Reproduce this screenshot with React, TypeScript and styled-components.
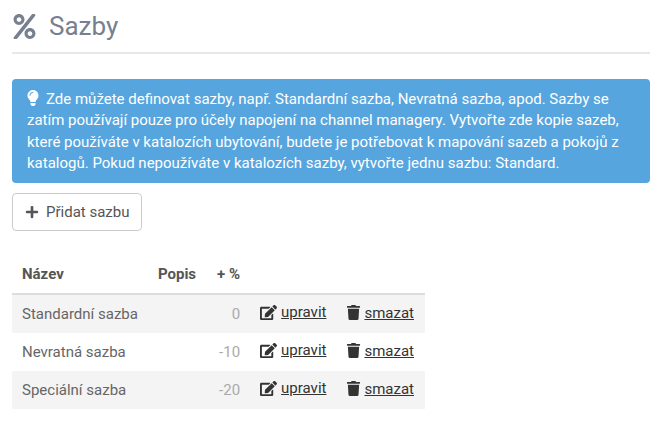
import React from "react";
import styled, { createGlobalStyle } from "styled-components";
import { FaEdit, FaLightbulb, FaPercent, FaPlus, FaTrash } from "react-icons/fa";

const GlobalStyle = createGlobalStyle`
  html, body {
    margin: 0;
    padding: 0;
    background: #fff;
    font-family: Roboto, "Liberation Sans", sans-serif;
    font-size: 15px;
    color: #555;
  }
`;

const Page = styled.div`
  padding: 0 12px;
  width: 638px;
`;

const Header = styled.div`
  display: flex;
  align-items: center;
  gap: 12px;
  height: 52px;
  border-bottom: 2px solid #e8e8e8;
  color: #76808f;
`;

const Title = styled.h1`
  margin: 0;
  font-size: 26px;
  font-weight: 400;
  color: #76808f;
`;

const Alert = styled.div`
  margin-top: 25px;
  background: #56a5de;
  color: #fff;
  border-radius: 4px;
  padding: 10px 15px 8px;
  font-size: 15px;
  line-height: 21.43px;
  height: 104px;
  box-sizing: border-box;
  svg {
    vertical-align: -2px;
    margin: 0 5px 0 -2px;
  }
`;

const AddButton = styled.button`
  display: flex;
  align-items: center;
  gap: 7px;
  margin-top: 10px;
  height: 38px;
  padding: 0 12px;
  background: #fff;
  border: 1px solid #ccc;
  border-radius: 4px;
  font-family: inherit;
  font-size: 15px;
  color: #555;
`;

const Table = styled.table`
  margin-top: 24px;
  border-collapse: collapse;
  font-size: 15px;
`;

const HeadCell = styled.th<{ $percent?: boolean }>`
  height: 38px;
  padding: 0 10px;
  font-weight: 700;
  color: #555;
  text-align: ${(p) => (p.$percent ? "right" : "left")};
  min-width: ${(p) => (p.$percent ? "24px" : "0")};
  border-bottom: 2px solid #ddd;
`;

const Row = styled.tr<{ $striped: boolean }>`
  background: ${(p) => (p.$striped ? "#f4f4f4" : "#fff")};
  & + & td {
    border-top: 1px solid #ddd;
  }
`;

const Cell = styled.td`
  height: 38px;
  padding: 0 10px;
  color: #666;
`;

const PercentCell = styled(Cell)`
  text-align: right;
  color: #aaa;
`;

const ActionCell = styled(Cell)`
  white-space: nowrap;
  &:last-child {
    padding-right: 11px;
  }
`;

const ActionLink = styled.a<{ $gap: number }>`
  display: inline-flex;
  align-items: center;
  gap: ${(p) => p.$gap}px;
  color: #333;
  span {
    text-decoration: underline;
  }
`;

const rates = [
  { name: "Standardní sazba", value: 0 },
  { name: "Nevratná sazba", value: -10 },
  { name: "Speciální sazba", value: -20 },
];

export default function App() {
  return (
    <Page>
      <GlobalStyle />
      <Header>
        <FaPercent size={25} />
        <Title>Sazby</Title>
      </Header>
      <Alert>
        <FaLightbulb size={16} />
        Zde můžete definovat sazby, např. Standardní sazba, Nevratná sazba, apod. Sazby se zatím
        používají pouze pro účely napojení na channel managery. Vytvořte zde kopie sazeb, které
        používáte v katalozích ubytování, budete je potřebovat k mapování sazeb a pokojů z katalogů.
        Pokud nepoužíváte v katalozích sazby, vytvořte jednu sazbu: Standard.
      </Alert>
      <AddButton>
        <FaPlus size={14} />
        Přidat sazbu
      </AddButton>
      <Table>
        <thead>
          <tr>
            <HeadCell>Název</HeadCell>
            <HeadCell>Popis</HeadCell>
            <HeadCell $percent>+ %</HeadCell>
            <HeadCell />
            <HeadCell />
          </tr>
        </thead>
        <tbody>
          {rates.map((rate, index) => (
            <Row key={rate.name} $striped={index % 2 === 0}>
              <Cell>{rate.name}</Cell>
              <Cell />
              <PercentCell>{rate.value}</PercentCell>
              <ActionCell>
                <ActionLink $gap={4}>
                  <FaEdit size={17} />
                  <span>upravit</span>
                </ActionLink>
              </ActionCell>
              <ActionCell>
                <ActionLink $gap={3}>
                  <FaTrash size={15} />
                  <span>smazat</span>
                </ActionLink>
              </ActionCell>
            </Row>
          ))}
        </tbody>
      </Table>
    </Page>
  );
}
